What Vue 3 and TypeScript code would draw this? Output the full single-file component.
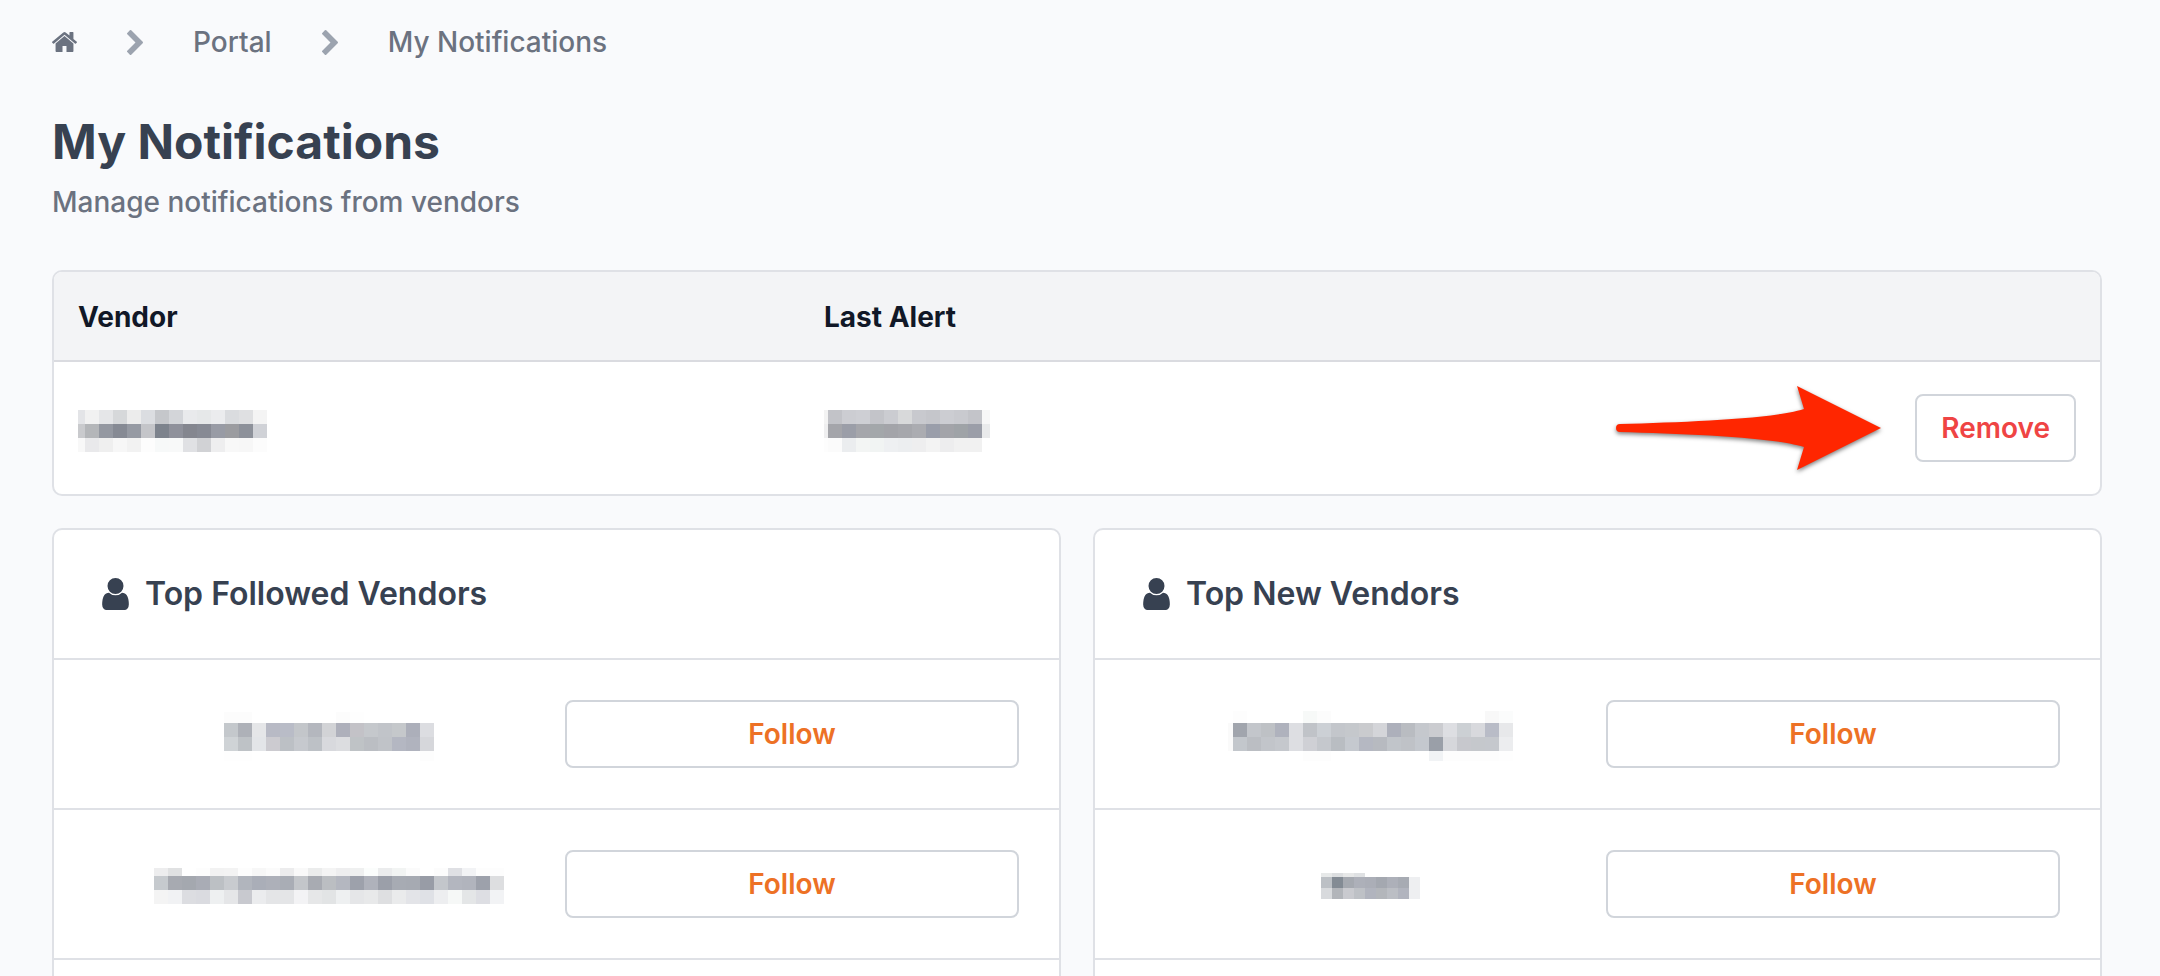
<script setup lang="ts">
interface Mosaic {
  label: string
  cols: number[]
  rows: number[]
  shades: string[]
}

interface Cell {
  x: number
  y: number
  w: number
  h: number
  fill: string
}

const same = (size: number, count: number): number[] => Array(count).fill(size)

const vendorName: Mosaic = {
  label: 'Hidden vendor name',
  cols: [7, ...same(14, 13)],
  rows: [14, 14, 14],
  shades: [
    'e3e4e7 f1f1f1 e5e6e8 d6d8da ececec dbdde1 c5c7cb d3d5d9 e9eaec e6e8e9 ebecee dadcdf dfe0e2 f4f4f4',
    'c9cacd b4b6b9 9498a1 868a94 969aa3 c4c5c9 7d838d 8f919b 84868f 878a94 989ba5 9b9ca0 8d919a d0d2d7',
    'f8f8f8 e9e9eb efefef f7f7f7 f2f2f2 fdfdfd f7f9f9 f8f9f9 e0e1e4 d1d2d5 eeeeef f8f8f8 f7f7f7 fcfcfc',
  ],
}

const alertDate: Mosaic = {
  label: 'Hidden alert date',
  cols: [4, ...same(14, 11), 8],
  rows: [14, 14, 14],
  shades: [
    'f3f3f3 c2c3c8 cccdd2 cecfd4 c3c4c9 cbccd1 d8d9da c8c9ce c5c6cb cccdd2 c9cacf c3c4c9 f7f7f7',
    'efeff0 a4a5aa 9b9ea8 a5a6ab a3a7aa a3a4a9 a6a7ac abacb1 9a9eaa a3a4a9 9fa3a7 9b9ea8 e9eaeb',
    'fdfdfd fbfbfb ebedef f3f5f4 f1f4f3 eef0f2 eceef0 eeeeef f3f3f3 ededee f1f1f1 f1f1f1 ffffff',
  ],
}

const followed: Mosaic[] = [
  {
    label: 'First followed vendor',
    cols: same(14, 15),
    rows: [11, 14, 14, 10],
    shades: [
      'fcfcfc fcfcfc ffffff ffffff ffffff ffffff ffffff ffffff fcfcfc fefefe ffffff ffffff ffffff ffffff ffffff',
      'c4c8cc aeb1b8 e5e6e8 b8bac5 b9bcc7 c3c6ca b4b7be d2d3d6 aeb0bb c3c2c7 c5c8cc c1c4c9 c5c8cb acafba dcdde1',
      'cfd3d6 bec2c6 e3e5e8 cccbd0 bcc0c5 c6c9ce bdc1c6 d8d9dd dcdde0 bfc3c6 bbbec3 c0c3c8 b4b7c2 b0b3be d6d7db',
      'fefefe fefefe ffffff ffffff ffffff ffffff ffffff ffffff ffffff ffffff ffffff ffffff ffffff ffffff fdfdfd',
    ],
  },
  {
    label: 'Second followed vendor',
    cols: same(14, 25),
    rows: [8, 14, 14],
    shades: [
      'ededee e0e1e2 ffffff fdfdfd f2f2f2 f3f3f3 fdfdfd f7f7f7 fbfbfb ececed f9f9f9 ebecec f4f4f4 eeeeef eff0f0 fbfdfc ebeced f2f4f3 fbfbfb ffffff fcfcfc dfe0e4 f2f3f5 fdfdfd fdfdfd',
      'c6cace a7aab1 a4a8af a9acb5 bcc0c4 c8cbcf b1b5bd aaaeb8 adb0b9 a9adb5 c3c6ca a8abb2 bbbec2 b4b7c0 9da1ab afb2bb 9b9fa9 a7abb3 a6aab2 989ca6 c3c6cb b3b6bf b1b4bd 9da1ab dddee0',
      'f4f4f4 f1f2f4 dcdde1 dadbe0 eef0f1 e5e6e8 c8c9cf ebecee e4e5e7 e4e5e7 f3f3f5 e6e7e8 e2e4e5 eef0f1 e5e6e8 e8e9ea dedfe1 eaebec e3e4e8 dfe1e6 edeef0 f6f8f7 e4e6e7 dddee3 f2f3f5',
    ],
  },
]

const newest: Mosaic[] = [
  {
    label: 'First new vendor',
    cols: [5, ...same(14, 20)],
    rows: [12, 14, 14, 10],
    shades: [
      'ffffff fdfdfd ffffff ffffff ffffff ffffff f7f9f8 fcfcfc ffffff ffffff ffffff ffffff ffffff ffffff ffffff ffffff ffffff ffffff ffffff f8f8f8 fbfcfc',
      'fafafa a1a5ad c3c6cb bec1c5 afb2bd dddee2 c0c3c8 ccd0d5 c3c6cb c5c8cc cacbce d4d5d9 adb0bb b9bcc1 c5c8cd cbccd0 dddee2 ccd0d4 d8d9dd b9bcc7 e7e8ea',
      'fafafa c3c7cc bbbec3 c2c5ca c5c8cd dddee2 cfd0d5 c5c8cd b9bdc2 c5c9cf b5b8c2 b7bac0 c1c5ca bfc2c7 c4c8ce 9a9fa8 d6d7db c7c8cd c5c8cc c5c8cd ecedef',
      'ffffff ffffff ffffff ffffff ffffff ffffff fdfdfd fdfdfd ffffff ffffff ffffff ffffff ffffff ffffff ffffff f1f3f5 fdfdfd fdfdfd fdfdfd fdfdfd fefefe',
    ],
  },
  {
    label: 'Second new vendor',
    cols: same(11, 9),
    rows: [4, 11, 11],
    shades: [
      'e7e9e9 dcdee0 e7e8e8 dfe1e3 ffffff ffffff ffffff ffffff ffffff',
      'bcc0c5 838b94 a5a9b0 adb0b9 abaeb7 a4a8b0 adb0b9 a7abb3 eeeff1',
      'd8dadd b2b5ba c9cacf bec1c6 b1b4be b3b6bb bbbec4 b1b4be eeeff1',
    ],
  },
]

const groups = [
  { title: 'Top Followed Vendors', vendors: followed },
  { title: 'Top New Vendors', vendors: newest },
]

const sum = (sizes: number[]): number => sizes.reduce((total, size) => total + size, 0)

function cells(mosaic: Mosaic): Cell[] {
  return mosaic.rows.flatMap((h, r) =>
    mosaic.shades[r].split(' ').map((shade, c) => ({
      x: sum(mosaic.cols.slice(0, c)),
      y: sum(mosaic.rows.slice(0, r)),
      w: mosaic.cols[c],
      h,
      fill: '#' + shade,
    })),
  )
}
</script>

<template>
  <main class="page">
    <nav class="crumbs" aria-label="Breadcrumb">
      <a class="crumb" href="#home" aria-label="Home">
        <svg class="home" viewBox="90 253 1612 1283" aria-hidden="true">
          <path
            d="M1472 992v480q0 26-19 45t-45 19h-384v-384h-256v384h-384q-26 0-45-19t-19-45v-480q0-1 .5-3t.5-3l575-474 575 474q1 2 1 6zm223-69l-62 74q-8 9-21 11h-3q-13 0-21-7l-692-577-692 577q-12 8-24 7-13-2-21-11l-62-74q-8-10-7-23.5t11-21.5l719-599q32-26 76-26t76 26l244 204v-195q0-14 9-23t23-9h192q14 0 23 9t9 23v408l219 182q10 8 11 21.5t-7 23.5z"
          />
        </svg>
      </a>
      <template v-for="crumb in ['Portal', 'My Notifications']" :key="crumb">
        <svg class="chevron" viewBox="346 26 1036 1612" aria-hidden="true">
          <path
            d="M1363 877l-742 742q-19 19-45 19t-45-19l-166-166q-19-19-19-45t19-45l531-531-531-531q-19-19-19-45t19-45l166-166q19-19 45-19t45 19l742 742q19 19 19 45t-19 45z"
          />
        </svg>
        <a class="crumb" href="#">{{ crumb }}</a>
      </template>
    </nav>

    <header class="intro">
      <h1>My Notifications</h1>
      <p>Manage notifications from vendors</p>
    </header>

    <section class="card">
      <table class="alerts">
        <thead>
          <tr>
            <th class="vendor" scope="col">Vendor</th>
            <th scope="col">Last Alert</th>
            <td></td>
          </tr>
        </thead>
        <tbody>
          <tr>
            <td v-for="item in [vendorName, alertDate]" :key="item.label">
              <svg
                class="mosaic"
                role="img"
                :aria-label="item.label"
                :width="sum(item.cols)"
                :height="sum(item.rows)"
                shape-rendering="crispEdges"
              >
                <rect
                  v-for="(cell, i) in cells(item)"
                  :key="i"
                  :x="cell.x"
                  :y="cell.y"
                  :width="cell.w"
                  :height="cell.h"
                  :fill="cell.fill"
                />
              </svg>
            </td>
            <td>
              <div class="action">
                <svg class="arrow" viewBox="0 0 265 84" aria-hidden="true">
                  <path
                    d="M4 38C70 36 156 33 188 23L181 0L265 42L181 84L188 61C156 51 70 48 4 46A4 4 0 0 1 4 38Z"
                  />
                </svg>
                <button class="button remove" type="button">Remove</button>
              </div>
            </td>
          </tr>
        </tbody>
      </table>
    </section>

    <div class="groups">
      <section v-for="group in groups" :key="group.title" class="card group">
        <h2>
          <svg class="user" viewBox="256 128 1280 1536" aria-hidden="true">
            <path
              d="M1536 1399q0 109-62.5 187t-150.5 78h-854q-88 0-150.5-78t-62.5-187q0-85 8.5-160.5t31.5-152 58.5-131 94-89 134.5-34.5q131 128 313 128t313-128q76 0 134.5 34.5t94 89 58.5 131 31.5 152 8.5 160.5zm-256-887q0 159-112.5 271.5t-271.5 112.5-271.5-112.5-112.5-271.5 112.5-271.5 271.5-112.5 271.5 112.5 112.5 271.5z"
            />
          </svg>
          {{ group.title }}
        </h2>
        <ul>
          <li v-for="item in group.vendors" :key="item.label">
            <svg
              class="mosaic"
              role="img"
              :aria-label="item.label"
              :width="sum(item.cols)"
              :height="sum(item.rows)"
              shape-rendering="crispEdges"
            >
              <rect
                v-for="(cell, i) in cells(item)"
                :key="i"
                :x="cell.x"
                :y="cell.y"
                :width="cell.w"
                :height="cell.h"
                :fill="cell.fill"
              />
            </svg>
            <button class="button follow" type="button">Follow</button>
          </li>
          <li></li>
        </ul>
      </section>
    </div>
  </main>
</template>

<style>
body {
  margin: 0;
  background: #f9fafc;
}

html {
  height: 100%;
  overflow: hidden;
}
</style>

<style scoped>
.page {
  box-sizing: border-box;
  padding: 24px 58px 0 52px;
  font-family: Inter, "Liberation Sans", sans-serif;
  font-size: 28px;
  line-height: 36px;
  color: #6b7280;
}

.crumbs {
  display: flex;
  align-items: center;
  gap: 50px;
  font-weight: 500;
}

.crumb {
  display: flex;
  color: inherit;
  text-decoration: none;
}

.home {
  width: 25px;
  height: 20px;
  fill: #6b7280;
}

.chevron {
  width: 16px;
  height: 25px;
  fill: #9ca3af;
}

.intro {
  margin: 52px 0 50px;
}

h1 {
  margin: 0;
  font-size: 48px;
  font-weight: 700;
  line-height: 60px;
  color: #374151;
}

p {
  margin: 12px 0 0;
  font-weight: 500;
}

.card {
  overflow: hidden;
  background: #fff;
  border: 2px solid #dfe1e6;
  border-radius: 10px;
}

.alerts {
  width: 100%;
  border-collapse: collapse;
  table-layout: fixed;
  text-align: left;
}

.alerts thead {
  background: #f3f4f6;
  box-shadow: inset 0 -2px #dadbe0;
  color: #111827;
}

.alerts th,
.alerts td {
  padding: 24px;
}

.alerts th {
  padding: 27px 24px;
  font-weight: 700;
}

.alerts .vendor {
  width: 698px;
}

.alerts tbody .mosaic {
  margin-top: 6px;
}

.mosaic {
  display: block;
}

.action {
  display: flex;
  align-items: center;
  justify-content: flex-end;
  gap: 34px;
}

.arrow {
  width: 265px;
  height: 84px;
  overflow: visible;
  fill: #ff2600;
  filter: drop-shadow(0 2px 2px rgb(0 0 0 / 50%));
}

.button {
  box-sizing: border-box;
  height: 68px;
  padding: 0 24px;
  background: #fff;
  border: 2px solid #d1d5db;
  border-radius: 8px;
  font: inherit;
  font-weight: 600;
  cursor: pointer;
}

.remove {
  color: #ef4444;
}

.follow {
  color: #ed7125;
}

.groups {
  display: grid;
  grid-template-columns: 1fr 1fr;
  gap: 32px;
  margin-top: 32px;
}

h2 {
  display: flex;
  align-items: center;
  gap: 16px;
  margin: 0;
  padding: 44px 48px;
  font-size: 32px;
  font-weight: 600;
  line-height: 40px;
  color: #374151;
}

.user {
  width: 27px;
  height: 32px;
  fill: #374151;
}

ul {
  margin: 0;
  padding: 0;
  list-style: none;
}

li {
  display: grid;
  grid-template-columns: 28fr 27fr;
  align-items: center;
  padding: 40px;
  border-top: 2px solid #dfe1e6;
}

li .mosaic {
  justify-self: center;
  margin-top: 4px;
}
</style>
